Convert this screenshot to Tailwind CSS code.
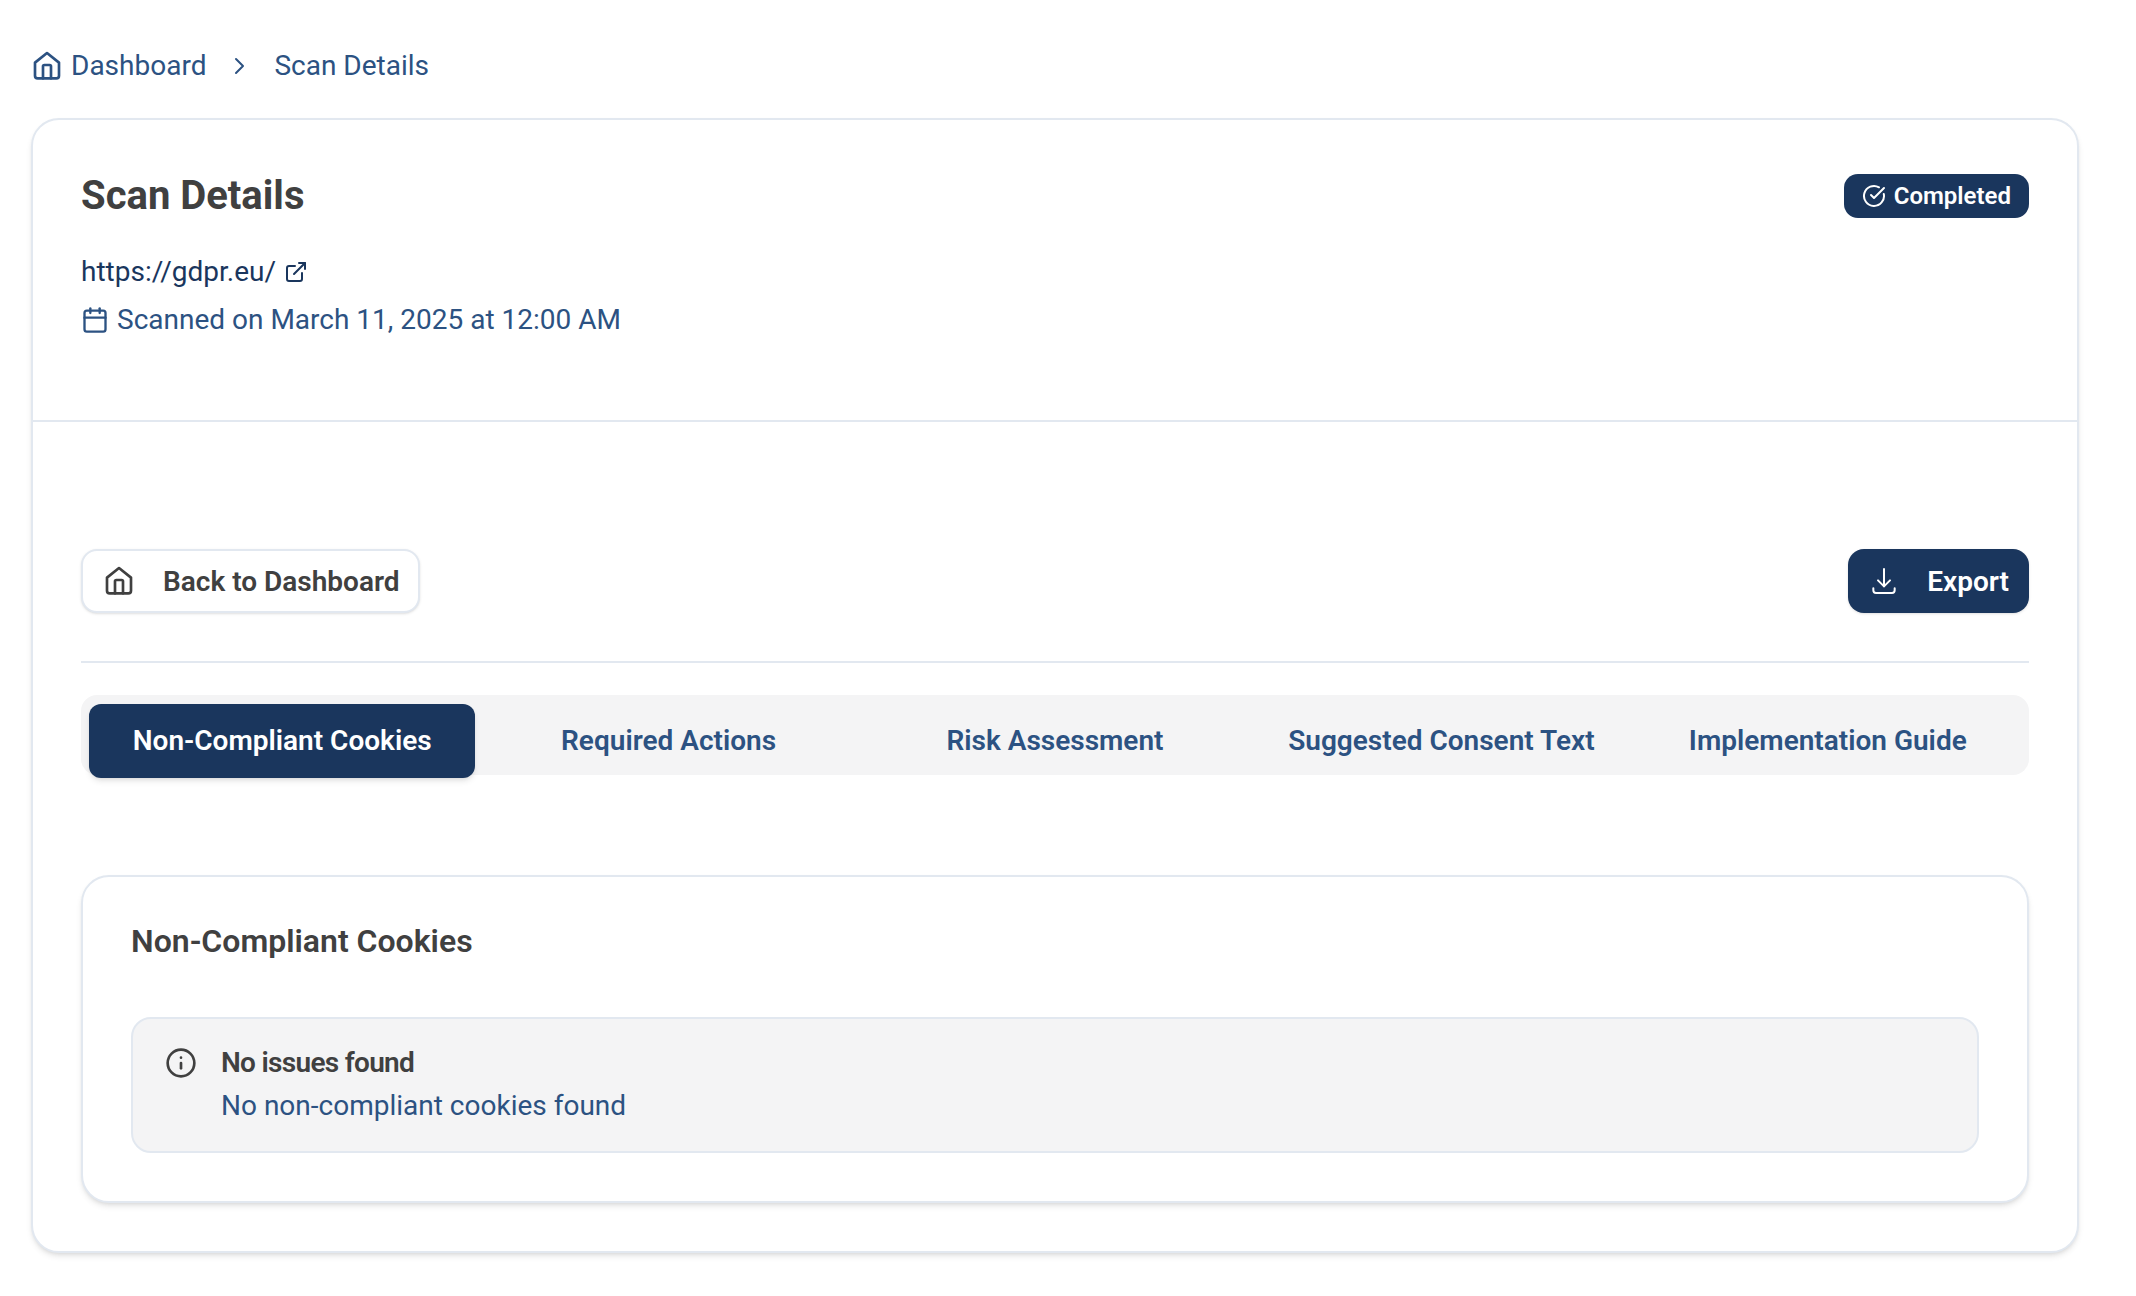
<!DOCTYPE html>
<html lang="en">
<head>
  <meta charset="UTF-8">
  <title>Scan Details</title>
  <script src="https://cdn.jsdelivr.net/npm/@tailwindcss/browser@4"></script>
</head>
<body class="bg-white min-h-screen font-['Roboto',sans-serif] text-[#404040]">
<div class="w-[2079px] pl-[31px] pt-[45px]">
  <!-- Breadcrumb -->
  <nav class="flex items-center h-[42px] text-[28px] text-[#2c5282]">
    <svg class="w-8 h-8 mr-2 -mt-[3px]" viewBox="0 0 24 24" fill="none" stroke="currentColor" stroke-width="2" stroke-linecap="round" stroke-linejoin="round"><path d="M3 10.2 12 3l9 7.2V20a2 2 0 0 1-2 2H5a2 2 0 0 1-2-2z"/><path d="M9 22v-9a1 1 0 0 1 1-1h4a1 1 0 0 1 1 1v9"/></svg>
    <span>Dashboard</span>
    <svg class="w-6 h-6 ml-[21px] mr-[23px]" viewBox="0 0 24 24" fill="none" stroke="currentColor" stroke-width="2" stroke-linecap="round" stroke-linejoin="round"><path d="m9 5 7 7-7 7"/></svg>
    <span>Scan Details</span>
  </nav>

  <div class="mt-[31px] border-2 border-[#e2e8f0] rounded-[28px] shadow-md bg-white">
    <!-- Header -->
    <div class="h-[302px] border-b-2 border-[#e2e8f0] px-[48px] pt-[48px]">
      <div class="flex justify-between items-start">
        <h1 class="text-[40px] leading-[56px] font-bold">Scan Details</h1>
        <span class="mt-[6px] flex items-center h-[44px] pl-[18px] pr-[18px] gap-[8px] rounded-[14px] bg-[#1a365d] text-white text-[24px] font-semibold">
          <svg class="w-6 h-6" viewBox="0 0 24 24" fill="none" stroke="currentColor" stroke-width="2" stroke-linecap="round" stroke-linejoin="round"><path d="M21.8 10A10 10 0 1 1 17 3.3"/><path d="m9 11 3 3L22 4"/></svg>
          Completed
        </span>
      </div>
      <div class="mt-[27px] flex items-center h-[42px] text-[28px] text-[#1a365d]">
        https://gdpr.eu/
        <svg class="w-6 h-6 ml-2" viewBox="0 0 24 24" fill="none" stroke="currentColor" stroke-width="2" stroke-linecap="round" stroke-linejoin="round"><path d="M18 13v6a2 2 0 0 1-2 2H5a2 2 0 0 1-2-2V8a2 2 0 0 1 2-2h6"/><path d="m15 3 6 0 0 6"/><path d="M10 14 21 3"/></svg>
      </div>
      <div class="mt-[6px] flex items-center h-[42px] text-[28px] text-[#2c5282]">
        <svg class="w-7 h-7 mr-2" viewBox="0 0 24 24" fill="none" stroke="currentColor" stroke-width="2" stroke-linecap="round" stroke-linejoin="round"><path d="M8 2v4"/><path d="M16 2v4"/><rect x="3" y="4" width="18" height="18" rx="2"/><path d="M3 10h18"/></svg>
        Scanned on March 11, 2025 at 12:00 AM
      </div>
    </div>

    <div class="px-[48px] pt-[127px] pb-[48px]">
      <!-- Actions -->
      <div class="flex justify-between items-center pb-[48px] border-b-2 border-[#e2e8f0]">
        <button class="flex items-center h-[64px] pl-[20px] pr-[18px] pt-[1px] gap-[28px] border-2 border-[#e2e8f0] rounded-[16px] shadow-sm bg-white text-[28px] font-semibold">
          <svg class="w-8 h-8 -mt-[3px]" viewBox="0 0 24 24" fill="none" stroke="currentColor" stroke-width="2" stroke-linecap="round" stroke-linejoin="round"><path d="M3 10.2 12 3l9 7.2V20a2 2 0 0 1-2 2H5a2 2 0 0 1-2-2z"/><path d="M9 22v-9a1 1 0 0 1 1-1h4a1 1 0 0 1 1 1v9"/></svg>
          Back to Dashboard
        </button>
        <button class="flex items-center h-[64px] px-[20px] pt-[1px] gap-[27px] rounded-[16px] shadow-sm bg-[#1a365d] text-white text-[28px] font-semibold">
          <svg class="w-8 h-8 -mt-[1px]" viewBox="0 0 24 24" fill="none" stroke="currentColor" stroke-width="1.5" stroke-linecap="round" stroke-linejoin="round"><path d="M12 3v13"/><path d="m7.5 11.5 4.5 4.5 4.5-4.5"/><path d="M4 17.5V19a2 2 0 0 0 2 2h12a2 2 0 0 0 2-2v-1.5"/></svg>
          Export
        </button>
      </div>

      <!-- Tabs -->
      <div class="mt-[32px] grid grid-cols-5 h-[80px] pt-[9px] px-[8px] rounded-[16px] bg-[#f4f4f5] text-[28px] font-semibold text-[#2c5282]">
        <div class="flex items-center justify-center h-[74px] rounded-[12px] bg-[#1a365d] text-white shadow-md">Non-Compliant Cookies</div>
        <div class="flex items-center justify-center h-[74px]">Required Actions</div>
        <div class="flex items-center justify-center h-[74px]">Risk Assessment</div>
        <div class="flex items-center justify-center h-[74px]">Suggested Consent Text</div>
        <div class="flex items-center justify-center h-[74px]">Implementation Guide</div>
      </div>

      <!-- Panel -->
      <div class="mt-[100px] border-2 border-[#e2e8f0] rounded-[28px] shadow-md bg-white px-[48px] pt-[42px] pb-[48px]">
        <h2 class="text-[32px] leading-[44px] font-semibold">Non-Compliant Cookies</h2>
        <div class="mt-[54px] flex h-[136px] gap-[24px] px-[32px] pt-[24px] border-2 border-[#e2e8f0] rounded-[20px] bg-[#f4f4f5]">
          <svg class="w-8 h-8 mt-[4px]" viewBox="0 0 24 24" fill="none" stroke="currentColor" stroke-width="2" stroke-linecap="round" stroke-linejoin="round"><circle cx="12" cy="12" r="10"/><path d="M12 16v-4"/><path d="M12 8h.01"/></svg>
          <div>
            <div class="text-[28px] leading-[40px] font-semibold tracking-tight">No issues found</div>
            <div class="mt-[1px] text-[28px] leading-[44px] text-[#2c5282]">No non-compliant cookies found</div>
          </div>
        </div>
      </div>
    </div>
  </div>
</div>
</body>
</html>
